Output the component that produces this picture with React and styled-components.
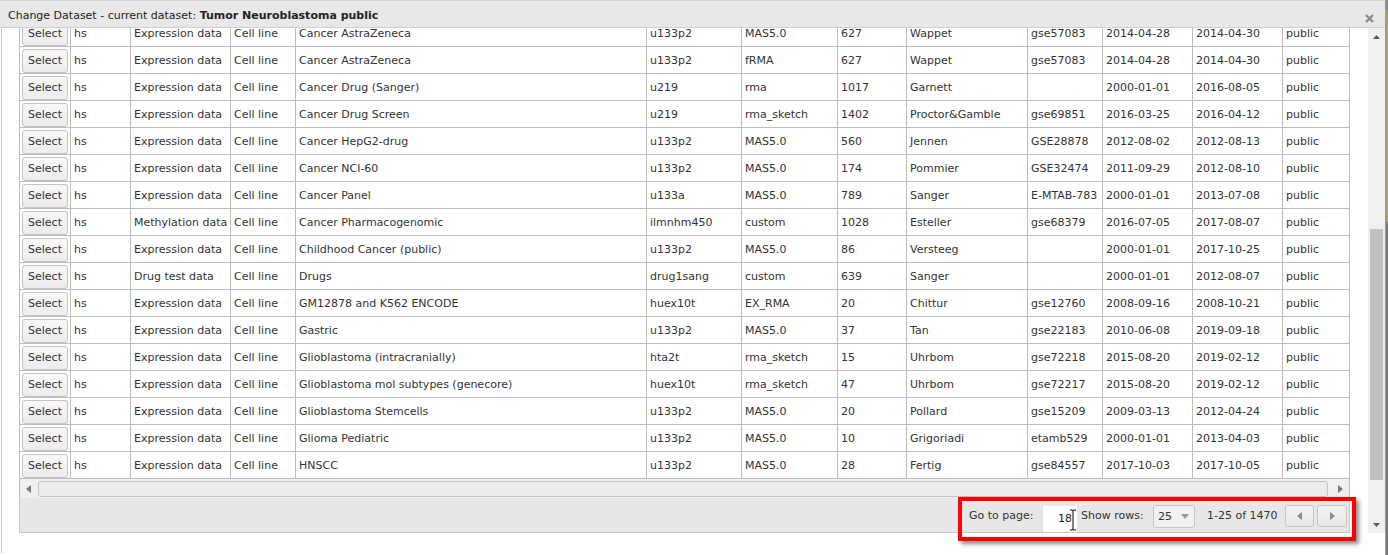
import React from "react";
import styled, { createGlobalStyle } from "styled-components";

const GlobalStyle = createGlobalStyle`
  html, body { margin: 0; padding: 0; background: #ffffff; }
  body { font-family: "DejaVu Sans", Verdana, sans-serif; font-size: 11px; color: #333; }
  * { box-sizing: border-box; }
`;

const COLS = [51, 60, 100, 65, 351, 95, 96, 69, 121, 75, 90, 90, 66];
const ROW_BORDER = "#bdbdbd";

const rows = [
  ["hs", "Expression data", "Cell line", "Cancer AstraZeneca", "u133p2", "MAS5.0", "627", "Wappet", "gse57083", "2014-04-28", "2014-04-30", "public"],
  ["hs", "Expression data", "Cell line", "Cancer AstraZeneca", "u133p2", "fRMA", "627", "Wappet", "gse57083", "2014-04-28", "2014-04-30", "public"],
  ["hs", "Expression data", "Cell line", "Cancer Drug (Sanger)", "u219", "rma", "1017", "Garnett", "", "2000-01-01", "2016-08-05", "public"],
  ["hs", "Expression data", "Cell line", "Cancer Drug Screen", "u219", "rma_sketch", "1402", "Proctor&Gamble", "gse69851", "2016-03-25", "2016-04-12", "public"],
  ["hs", "Expression data", "Cell line", "Cancer HepG2-drug", "u133p2", "MAS5.0", "560", "Jennen", "GSE28878", "2012-08-02", "2012-08-13", "public"],
  ["hs", "Expression data", "Cell line", "Cancer NCI-60", "u133p2", "MAS5.0", "174", "Pommier", "GSE32474", "2011-09-29", "2012-08-10", "public"],
  ["hs", "Expression data", "Cell line", "Cancer Panel", "u133a", "MAS5.0", "789", "Sanger", "E-MTAB-783", "2000-01-01", "2013-07-08", "public"],
  ["hs", "Methylation data", "Cell line", "Cancer Pharmacogenomic", "ilmnhm450", "custom", "1028", "Esteller", "gse68379", "2016-07-05", "2017-08-07", "public"],
  ["hs", "Expression data", "Cell line", "Childhood Cancer (public)", "u133p2", "MAS5.0", "86", "Versteeg", "", "2000-01-01", "2017-10-25", "public"],
  ["hs", "Drug test data", "Cell line", "Drugs", "drug1sang", "custom", "639", "Sanger", "", "2000-01-01", "2012-08-07", "public"],
  ["hs", "Expression data", "Cell line", "GM12878 and K562 ENCODE", "huex10t", "EX_RMA", "20", "Chittur", "gse12760", "2008-09-16", "2008-10-21", "public"],
  ["hs", "Expression data", "Cell line", "Gastric", "u133p2", "MAS5.0", "37", "Tan", "gse22183", "2010-06-08", "2019-09-18", "public"],
  ["hs", "Expression data", "Cell line", "Glioblastoma (intracranially)", "hta2t", "rma_sketch", "15", "Uhrbom", "gse72218", "2015-08-20", "2019-02-12", "public"],
  ["hs", "Expression data", "Cell line", "Glioblastoma mol subtypes (genecore)", "huex10t", "rma_sketch", "47", "Uhrbom", "gse72217", "2015-08-20", "2019-02-12", "public"],
  ["hs", "Expression data", "Cell line", "Glioblastoma Stemcells", "u133p2", "MAS5.0", "20", "Pollard", "gse15209", "2009-03-13", "2012-04-24", "public"],
  ["hs", "Expression data", "Cell line", "Glioma Pediatric", "u133p2", "MAS5.0", "10", "Grigoriadi", "etamb529", "2000-01-01", "2013-04-03", "public"],
  ["hs", "Expression data", "Cell line", "HNSCC", "u133p2", "MAS5.0", "28", "Fertig", "gse84557", "2017-10-03", "2017-10-05", "public"],
];

const Page = styled.div`
  position: relative;
  display: flex;
  width: 1388px;
  height: 555px;
  overflow: hidden;
  background: #fff;
`;

const Dialog = styled.div`
  display: flex;
  flex-direction: column;
  width: 1385px;
  height: 555px;
  background: #fff;
`;

const EdgeStrip = styled.div`
  width: 3px;
  height: 555px;
  background: linear-gradient(
    to bottom,
    #8a8a8a 0px, #8a8a8a 10px,
    #a2a266 10px, #a2a266 222px,
    #7b7b7b 222px, #7b7b7b 555px
  );
  border-left: 1px solid #9a9a9a;
`;

const TitleBar = styled.div`
  display: flex;
  align-items: center;
  justify-content: space-between;
  height: 28px;
  flex: none;
  padding: 2px 11px 0 8px;
  background: #e8e8e8;
  border-top: 1px solid #d4d4d4;
  border-bottom: 1px solid #d0d0d0;
  color: #222;
  font-size: 11px;
  white-space: nowrap;
`;

const TitleText = styled.span`
  b { font-weight: bold; color: #222; }
`;

const CloseButton = styled.span`
  display: flex;
  align-self: flex-end;
  margin-bottom: 4px;
  width: 9px;
  height: 9px;
`;

const Content = styled.div`
  flex: 1;
  display: flex;
  flex-direction: column;
  margin-left: 1px;
  margin-bottom: 2px;
  border-left: 1px solid #c9c9c9;
`;

const Body = styled.div`
  display: flex;
  height: 505px;
  flex: none;
`;

const Viewport = styled.div`
  flex: 1;
  overflow: hidden;
  padding-left: 17px;
`;

const Scrolled = styled.div`
  margin-top: -8px;
  width: 1331px;
`;

const Grid = styled.div`
  border-left: 1px solid ${ROW_BORDER};
  border-right: 1px solid ${ROW_BORDER};
  background: #fff;
`;

const Row = styled.div`
  display: grid;
  grid-template-columns: ${COLS.map((c) => `${c}px`).join(" ")};
  height: 27px;
  border-bottom: 1px solid ${ROW_BORDER};
`;

const Cell = styled.div`
  display: flex;
  align-items: center;
  padding: 0 ${(p) => (p.$button ? "2px" : "3px")};
  border-right: ${(p) => (p.$last ? "none" : `1px solid ${ROW_BORDER}`)};
  overflow: hidden;
  white-space: nowrap;
  color: #333;
  font-size: 11px;
`;

const SelectButton = styled.button`
  width: 46px;
  height: 24px;
  padding: 0;
  margin-top: 1px;
  font-family: inherit;
  font-size: 11px;
  color: #333;
  background: linear-gradient(#f8f8f8, #ececec);
  border: 1px solid #c4c4c4;
  border-radius: 3px;
`;

const HScroll = styled.div`
  display: flex;
  align-items: center;
  height: 19px;
  background: #f0f0f0;
  border-left: 1px solid ${ROW_BORDER};
  border-right: 1px solid ${ROW_BORDER};
  padding: 0 6px 0 6px;
`;

const HThumb = styled.div`
  flex: 1;
  height: 16px;
  margin: 0 10px 0 7px;
  background: #ececec;
  border: 1px solid #c3c3c3;
  border-radius: 3px;
`;

const Footer = styled.div`
  display: flex;
  justify-content: flex-end;
  align-items: center;
  height: 35px;
  padding-right: 2px;
  background: #e7e7e7;
  border: 1px solid #c8c8c8;
  border-top: none;
  color: #333;
  font-size: 11px;
  white-space: nowrap;
`;

const Label = styled.span`
  width: ${(p) => p.$w}px;
  flex: none;
`;

const InputWrap = styled.div`
  position: relative;
  align-self: flex-start;
  margin-top: 8px;
  margin-right: 4px;
`;

const PageInput = styled.div`
  width: 35px;
  height: 26px;
  padding: 6px 5px 0 0;
  text-align: right;
  background: #fff;
  border-left: 1px solid #e2e2e2;
  font-size: 11px;
  color: #222;
`;

const Cursor = styled.svg`
  position: absolute;
  left: 27px;
  top: 3px;
`;

const RowsSelect = styled.div`
  display: flex;
  align-items: center;
  justify-content: space-between;
  width: 42px;
  height: 23px;
  margin-right: 12px;
  padding: 0 5px 0 4px;
  margin-top: 2px;
  background: #f1f1f1;
  border: 1px solid #c4c4c4;
  border-radius: 3px;
`;

const PagerButton = styled.div`
  display: flex;
  align-items: center;
  justify-content: center;
  width: ${(p) => p.$w}px;
  height: 22px;
  margin-left: ${(p) => p.$ml}px;
  margin-top: 2px;
  background: linear-gradient(#f3f3f3, #e8e8e8);
  border: 1px solid #c6c6c6;
  border-radius: 3px;
`;

const VScroll = styled.div`
  display: flex;
  flex-direction: column;
  align-items: center;
  width: 17px;
  height: 505px;
  flex: none;
  background: #f0f0f0;
`;

const ArrowBox = styled.div`
  display: flex;
  align-items: center;
  justify-content: center;
  height: 17px;
  width: 17px;
  flex: none;
`;

const VTrack = styled.div`
  flex: 1;
  width: 17px;
  display: flex;
  justify-content: center;
`;

const VThumb = styled.div`
  width: 13px;
  height: ${(p) => p.$h}px;
  margin-top: ${(p) => p.$top}px;
  background: #c1c1c1;
`;

const Annotation = styled.div`
  position: absolute;
  left: 958px;
  top: 497px;
  width: 398px;
  height: 44px;
  border: 4px solid #ff0000;
  box-shadow: 3px 3px 4px rgba(0, 0, 0, 0.45);
  pointer-events: none;
`;

const Tri = ({ dir, color = "#777", w = 5, h = 8 }) => {
  const pts = {
    left: `${w},0 ${w},${h} 0,${h / 2}`,
    right: `0,0 0,${h} ${w},${h / 2}`,
    up: `0,${h} ${w},${h} ${w / 2},0`,
    down: `0,0 ${w},0 ${w / 2},${h}`,
  }[dir];
  return (
    <svg width={w} height={h} viewBox={`0 0 ${w} ${h}`}>
      <polygon points={pts} fill={color} />
    </svg>
  );
};

export default function App() {
  return (
    <>
      <GlobalStyle />
      <Page>
        <Dialog>
          <TitleBar>
            <TitleText>
              Change Dataset - current dataset: <b>Tumor Neuroblastoma public</b>
            </TitleText>
            <CloseButton>
              <svg width="9" height="9" viewBox="0 0 9 9">
                <path d="M1 1 L8 8 M8 1 L1 8" stroke="#8a8a8a" strokeWidth="2.2" />
              </svg>
            </CloseButton>
          </TitleBar>
          <Content>
            <Body>
              <Viewport>
                <Scrolled>
                  <Grid>
                    {rows.map((r, i) => (
                      <Row key={i}>
                        <Cell $button>
                          <SelectButton>Select</SelectButton>
                        </Cell>
                        {r.map((v, j) => (
                          <Cell key={j} $last={j === r.length - 1}>
                            {v}
                          </Cell>
                        ))}
                      </Row>
                    ))}
                  </Grid>
                  <HScroll>
                    <Tri dir="left" color="#7a7a7a" w={5} h={8} />
                    <HThumb />
                    <Tri dir="right" color="#7a7a7a" w={5} h={8} />
                  </HScroll>
                  <Footer>
                    <Label $w={73}>Go to page:</Label>
                    <InputWrap>
                      <PageInput>18</PageInput>
                      <Cursor width="8" height="22" viewBox="0 0 8 22">
                        <path
                          d="M1 1 H3 M5 1 H7 M4 1.5 V20.5 M1 21 H3 M5 21 H7"
                          stroke="#fff"
                          strokeWidth="3"
                          fill="none"
                        />
                        <path
                          d="M1 1 H3 Q4 1 4 2 V20 Q4 21 3 21 H1 M7 1 H5 Q4 1 4 2 M4 20 Q4 21 5 21 H7"
                          stroke="#000"
                          strokeWidth="1"
                          fill="none"
                        />
                      </Cursor>
                    </InputWrap>
                    <Label $w={72}>Show rows:</Label>
                    <RowsSelect>
                      <span>25</span>
                      <Tri dir="down" color="#9a9a9a" w={8} h={5} />
                    </RowsSelect>
                    <Label $w={78}>1-25 of 1470</Label>
                    <PagerButton $w={29} $ml={0}>
                      <Tri dir="left" color="#8a8a8a" w={5} h={8} />
                    </PagerButton>
                    <PagerButton $w={30} $ml={3}>
                      <Tri dir="right" color="#8a8a8a" w={5} h={8} />
                    </PagerButton>
                  </Footer>
                </Scrolled>
              </Viewport>
              <VScroll>
                <ArrowBox>
                  <Tri dir="up" color="#5a5a5a" w={7} h={4} />
                </ArrowBox>
                <VTrack>
                  <VThumb $top={184} $h={251} />
                </VTrack>
                <ArrowBox>
                  <Tri dir="down" color="#5a5a5a" w={7} h={4} />
                </ArrowBox>
              </VScroll>
            </Body>
          </Content>
        </Dialog>
        <EdgeStrip />
        <Annotation />
      </Page>
    </>
  );
}
